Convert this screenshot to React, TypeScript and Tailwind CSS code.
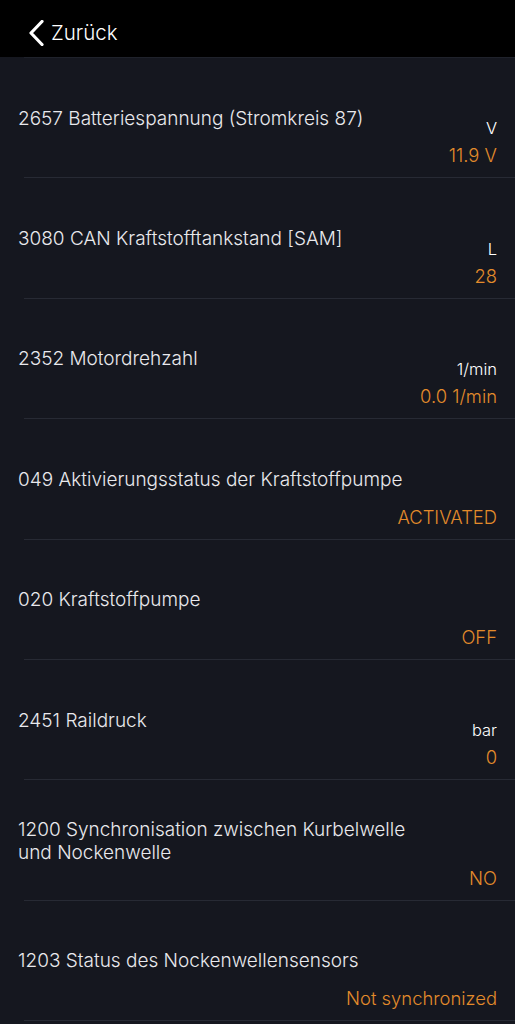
const rows = [
  { title: "2657 Batteriespannung (Stromkreis 87)", unit: "V", value: "11.9 V" },
  { title: "3080 CAN Kraftstofftankstand [SAM]", unit: "L", value: "28" },
  { title: "2352 Motordrehzahl", unit: "1/min", value: "0.0 1/min" },
  { title: "049 Aktivierungsstatus der Kraftstoffpumpe", unit: "", value: "ACTIVATED" },
  { title: "020 Kraftstoffpumpe", unit: "", value: "OFF" },
  { title: "2451 Raildruck", unit: "bar", value: "0" },
  { title: "1200 Synchronisation zwischen Kurbelwelle und Nockenwelle", unit: "", value: "NO" },
  { title: "1203 Status des Nockenwellensensors", unit: "", value: "Not synchronized" },
];

export default function App() {
  return (
    <div className="min-h-[1024px] bg-[#15171f] font-['Inter',sans-serif] text-[#e9e9ed]">
      {/* Nav bar */}
      <div className="flex h-[57px] items-center bg-black pl-[28px] pt-[9px]">
        <svg width="17" height="26" viewBox="0 0 17 26" fill="none" className="mr-[6px]">
          <path d="M14 1.5 L3 13 L14 24.5" stroke="white" strokeWidth="3.2" strokeLinecap="round" strokeLinejoin="round" />
        </svg>
        <span className="text-[20.5px] font-[350] text-white">Zurück</span>
      </div>
      <div className="ml-[24px] h-px bg-[#1f222b]" />

      {/* Parameter list */}
      <div>
        {rows.map((row) => (
          <div key={row.title}>
            <div className="grid h-[119.4px] px-[18px]">
              <div className="col-start-1 row-start-1 max-w-[400px] self-center pt-[1px] text-[19px] font-[350] leading-[23px]">
                {row.title}
              </div>
              <div className="col-start-1 row-start-1 flex flex-col items-end self-end justify-self-end pb-[11px]">
                {row.unit && (
                  <span className="mb-[6px] text-[16.5px] font-[350] leading-[20px] text-white">{row.unit}</span>
                )}
                <span className="text-[18.4px] font-[350] leading-[22px] text-[#e38b2b]">{row.value}</span>
              </div>
            </div>
            <div className="ml-[24px] h-px bg-[#272a34]" />
          </div>
        ))}
      </div>
    </div>
  );
}
